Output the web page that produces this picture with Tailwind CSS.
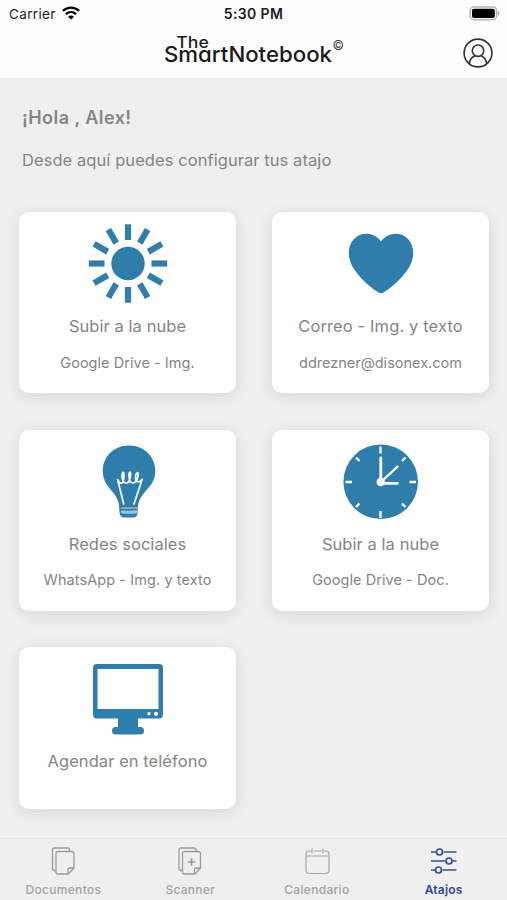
<!DOCTYPE html>
<html lang="es">
<head>
<meta charset="utf-8">
<title>The SmartNotebook</title>
<script src="https://cdn.jsdelivr.net/npm/@tailwindcss/browser@4"></script>
</head>
<body class="w-[507px] h-[900px] overflow-hidden bg-[#efefef] font-['Inter','Liberation_Sans',sans-serif] text-[#858585] flex flex-col">
<header class="h-[78px] shrink-0 bg-[#fdfdfd] text-[#1c1c1e] shadow-[0_1px_0_#ececec]">
  <div class="h-7 grid grid-cols-3 items-center px-[7px] text-[13.5px] leading-7">
    <div class="flex items-center gap-[6px] pl-[2px]"><span class="tracking-[.35px]">Carrier</span>
      <svg class="w-[18px] h-[14px] -mt-[3px]" viewBox="0 0 18 14" fill="none" stroke="#000" stroke-width="2.3"><path d="M.9 4.9C5.6.4 12.4.4 17.1 4.900M3.900 8.100c3-2.700 7.200-2.700 10.200 0"/><path d="M9 13.600 6 10.700c1.800-1.500 4.200-1.500 6 0z" fill="#000" stroke="none"/></svg>
    </div>
    <div class="text-center font-semibold whitespace-nowrap text-[14px] tracking-[.35px]">5:30 PM</div>
    <svg class="w-[31px] h-[15px] justify-self-end -mt-[2px]" viewBox="0 0 31 15"><rect x="1.200" y=".9" width="26.400" height="12.800" rx="3.800" fill="#fdfdfd" stroke="#b4b4b4" stroke-width="1.500"/><rect x="3" y="2.700" width="22.800" height="9.200" rx="2" fill="#000"/><path d="M28.900 5c2 .8 2 4 0 4.800z" fill="#aaa"/></svg>
  </div>
  <div class="h-[50px] flex items-center justify-between pl-[164px] pr-[14px]">
    <svg class="w-[183px] h-[40px]" viewBox="164 33 183 40" fill="#1b1b1b" font-family="Inter, sans-serif"><g font-weight="500" style="font-feature-settings:'cv11'"><text x="176.300" y="48" font-size="16.500" textLength="32.500" lengthAdjust="spacingAndGlyphs">The</text><text x="164" y="62.300" font-size="21.800" textLength="168" lengthAdjust="spacingAndGlyphs">SmartNotebook</text></g><text x="332.500" y="50.300" font-size="13" textLength="11.500" lengthAdjust="spacingAndGlyphs" fill="#444">©</text></svg>
    <svg class="w-[30px] h-[30px]" viewBox="0 0 30 30" fill="none" stroke="#333" stroke-width="1.600"><circle cx="15" cy="15" r="13.900"/><circle cx="15" cy="12.700" r="5.700"/><path d="M6.300 25.800c.6-4.500 3-7 6-8.200M23.700 25.800c-.6-4.500-3-7-6-8.200"/></svg>
  </div>
</header>
<main class="grow pt-[28px]">
  <h1 class="pl-[22px] text-[18px] leading-6 font-semibold tracking-[.45px]">¡Hola , Alex!</h1>
  <p class="pl-[22px] mt-[18px] text-[16.5px] leading-6 tracking-[.07px]">Desde aquí puedes configurar tus atajo</p>
  <div class="mt-[40px] pl-[19px] pr-[18px] grid grid-cols-2 gap-x-9 gap-y-[36.5px] text-center whitespace-nowrap">
    <section class="h-[181px] rounded-[10px] bg-white pt-3 shadow-[0_3px_16px_rgba(0,0,0,0.1)]">
      <svg class="mx-auto w-20 h-20" viewBox="-40 -39.500 80 80" fill="#2f7dab"><circle r="16.700"/><g stroke="#2f7dab" stroke-width="6.200"><path id="r" d="M0-23.500V-39.200"/><use href="#r" transform="rotate(30)"/><use href="#r" transform="rotate(60)"/><use href="#r" transform="rotate(90)"/><use href="#r" transform="rotate(120)"/><use href="#r" transform="rotate(150)"/><use href="#r" transform="rotate(180)"/><use href="#r" transform="rotate(210)"/><use href="#r" transform="rotate(240)"/><use href="#r" transform="rotate(270)"/><use href="#r" transform="rotate(300)"/><use href="#r" transform="rotate(330)"/></g></svg>
      <h2 class="mt-[10px] text-[16.5px] leading-6 tracking-[.06px]">Subir a la nube</h2>
      <p class="mt-[14.5px] text-[14.5px] leading-5 tracking-[.04px]">Google Drive - Img.</p>
    </section>
    <section class="h-[181px] rounded-[10px] bg-white pt-3 shadow-[0_3px_16px_rgba(0,0,0,0.1)]">
      <svg class="mx-auto w-20 h-20" viewBox="341 224 80 80" fill="#2f7dab"><path d="M381 241.500C388 232 401 231.500 408 239c7 7.500 6.500 19.500 1 28.500-5.500 9-14 17-23.500 23.800-3.500 2.500-5.500 2.500-9 0C367 284.500 358.500 276.500 353 267.500c-5.500-9-6-21 1-28.500 7-7.500 20-7 27 2.500z"/></svg>
      <h2 class="mt-[10px] text-[16.5px] leading-6 tracking-[.12px]">Correo - Img. y texto</h2>
      <p class="mt-[14.5px] text-[14.5px] leading-5">ddrezner@disonex.com</p>
    </section>
    <section class="h-[181px] rounded-[10px] bg-white pt-3 shadow-[0_3px_16px_rgba(0,0,0,0.1)]">
      <svg class="mx-auto w-20 h-20" viewBox="87.500 441.500 80 80" fill="#2f7dab"><path d="M128.500 445c-15 0-26.200 11-26.200 25.500 0 9 4 14 9 20 5.500 6.500 7.500 11 7.500 18 0 6 1.500 8.500 5 8.500h9c3.500 0 4.500-2.500 4.500-8.500 0-7 2.500-11.500 8-18 5-6 9.500-11 9.500-20 0-14.500-11.300-25.500-26.300-25.500z"/><g fill="none" stroke="#fff" stroke-linecap="round"><path stroke-width="1.700" d="M123.200 503.500 117 478.500c.8 3 3.500 5.500 5 3.500 1.700-3 1.800-10 .8-10.200-2-.3-2 10.700 3 10.700 4.300 0 5-11 3.800-11-2 0-1.500 11 2.500 11 4.700 0 6.700-10.200 5-10.500-1.800-.3-3.500 8.500-.3 9.200 2 .5 4.500-1 5-3L133.500 503.500"/><path stroke-width="1" opacity=".7" d="M121 507.500h15.500"/><path stroke-width="3.200" opacity=".55" d="M122 511.500c5 .4 9 .3 13.500-.2"/></g></svg>
      <h2 class="mt-[10px] text-[16.5px] leading-6 tracking-[.06px]">Redes sociales</h2>
      <p class="mt-[14px] text-[14.5px] leading-5 tracking-[.08px]">WhatsApp - Img. y texto</p>
    </section>
    <section class="h-[181px] rounded-[10px] bg-white pt-3 shadow-[0_3px_16px_rgba(0,0,0,0.1)]">
      <svg class="mx-auto w-20 h-20" viewBox="341 441.500 80 80"><circle cx="380.700" cy="481.300" r="37.300" fill="#2f7dab"/><g stroke="#fff" stroke-width="2.300"><path d="M380.500 446v7M380.500 510.500v7M345.500 481.500h6.500M409.500 481.500h6.500M356 457l3.500 3.500M405.500 457 402 460.500M356 506.500l3.500-3.500M405.500 506.500 402 503"/><path stroke-width="2.800" stroke-linecap="round" d="M380.800 481.500V457.500M381 482.800h16.500"/><path stroke-linecap="round" d="M381 481.500l16.500-15.300"/></g><circle cx="380.700" cy="481.500" r="4.200" fill="#fff"/></svg>
      <h2 class="mt-[10px] text-[16.5px] leading-6 tracking-[.06px]">Subir a la nube</h2>
      <p class="mt-[14px] text-[14.5px] leading-5 tracking-[.06px]">Google Drive - Doc.</p>
    </section>
    <section class="h-[162px] rounded-[10px] bg-white pt-3 shadow-[0_3px_16px_rgba(0,0,0,0.1)]">
      <svg class="mx-auto w-20 h-20" viewBox="88 659 80 80" fill="#2f7dab"><path fill-rule="evenodd" d="M97 664h62q4 0 4 4v46q0 4.500-4 4.500h-21V727h2.500q3.500 0 3.500 3.800t-3.500 3.800h-25q-3.500 0-3.500-3.800t3.500-3.800h2.500v-8.500H97q-4 0-4-4.500v-46q0-4 4-4zM97.500 669v40h61V669z"/><circle cx="149" cy="713.800" r="1.700" fill="#fff"/><circle cx="156" cy="713.800" r="2" fill="#fff"/></svg>
      <h2 class="mt-[10px] text-[16.5px] leading-6 tracking-[.06px]">Agendar en teléfono</h2>
    </section>
  </div>
</main>
<nav class="h-[62px] shrink-0 border-t border-[#e2e2e2] grid grid-cols-4 text-center text-[12px] leading-4 font-medium text-[#a3a3a3] pt-[6px]">
  <a class="flex flex-col items-center"><svg class="w-8 h-8" viewBox="48.500 845 32 32" fill="none" stroke="#9c9c9c" stroke-width="1.300" stroke-linejoin="round"><path d="M57 870.500h-1q-2 0-2-2V850q0-2 2-2h13q2 0 2 2v1"/><path d="M59.500 851.500h13.500q2.500 0 2.500 2.500v14l-5.500 6H59.500q-2 0-2-2v-18.500q0-2 2-2zM75.500 868h-4q-2 0-2 2v4"/></svg><span class="mt-[5px] tracking-[.3px]">Documentos</span></a>
  <a class="flex flex-col items-center"><svg class="w-8 h-8" viewBox="49 845 32 32" fill="none" stroke="#9c9c9c" stroke-width="1.300" stroke-linejoin="round"><path d="M57 870.500h-1q-2 0-2-2V850q0-2 2-2h13q2 0 2 2v1"/><path d="M59.500 851.500h13.500q2.500 0 2.500 2.500v14l-5.500 6H59.500q-2 0-2-2v-18.500q0-2 2-2zM75.500 868h-4q-2 0-2 2v4"/><path stroke-width="1.700" d="M66.500 858.300v7.400M62.800 862h7.400"/></svg><span class="mt-[5px] tracking-[.25px]">Scanner</span></a>
  <a class="flex flex-col items-center"><svg class="w-8 h-8" viewBox="301 845 32 32" fill="none" stroke="#a5a5a5" stroke-width="1.200"><path d="M311 851h-1.500q-3.500 0-3.500 3.500V870q0 3.500 3.500 3.500h16q3.500 0 3.500-3.500v-15.500q0-3.500-3.500-3.500H324M313.500 851h8M306 856h23M312 848.500v4.500M323 848.500v4.500"/></svg><span class="mt-[5px] tracking-[.3px]">Calendario</span></a>
  <a class="flex flex-col items-center text-[#34468b] font-semibold"><svg class="w-8 h-8" viewBox="427.500 845 32 32" fill="none" stroke="#3c4f94" stroke-width="1.700"><path d="M430.500 852h5M443 852h13M430.500 861h14M452 861h4M430.500 870h4M442 870h14"/><circle cx="439" cy="852" r="3"/><circle cx="448.500" cy="861" r="3"/><circle cx="438" cy="870" r="3"/></svg><span class="mt-[5px] tracking-[.2px]">Atajos</span></a>
</nav>
</body>
</html>
